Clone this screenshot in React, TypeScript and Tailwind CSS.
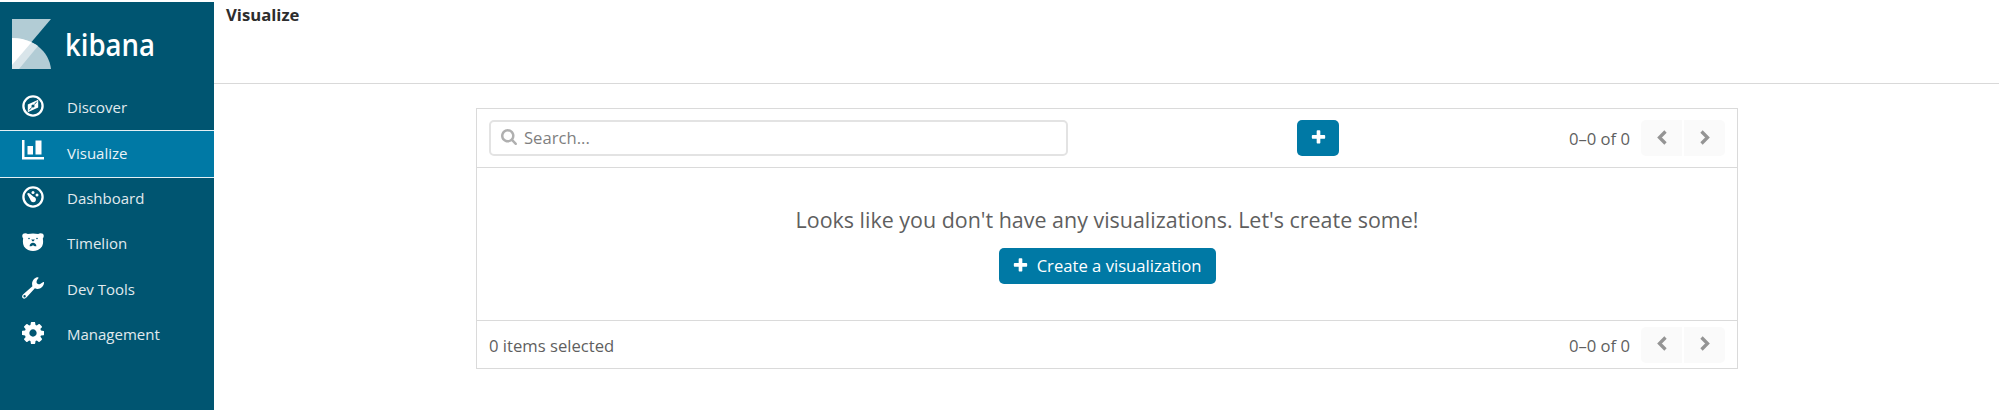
import type { ReactNode } from "react";

function KibanaMark() {
  return (
    <svg width="39" height="50" viewBox="0 0 39 50" className="shrink-0">
      <path d="M0 0H39L0 46Z" fill="#b2ccd5" />
      <path d="M0 19C21 19 37 32 39 50H0Z" fill="#b2ccd5" />
      <path d="M0 19C10 19 19 22 26 27L7 50H0Z" fill="#d9e5ea" />
      <path d="M0 19C7 19 14 20.500 19.500 23.200L0 46Z" fill="#fff" />
    </svg>
  );
}

function CompassIcon() {
  return (
    <svg width="22" height="22" viewBox="0 0 22 22">
      <circle cx="11" cy="11" r="9.600" fill="none" stroke="#fff" strokeWidth="2.300" />
      <path fill="#fff" fillRule="evenodd" d="M16.200 4.800V12.400L5.800 17.200V9.600ZM11 9.400A1.600 1.600 0 1 0 11 12.600A1.600 1.600 0 1 0 11 9.400Z" />
      <path d="M14.800 6.700 12.300 9.600M7.200 15.300 9.700 12.400" stroke="#005571" strokeWidth="0.900" />
    </svg>
  );
}

function BarsIcon() {
  return (
    <svg width="22" height="20" viewBox="0 0 22 20">
      <path fill="#fff" d="M0 0H2.500V17H22V19.500H0ZM5.500 6H11V14.500H5.500ZM13.500 0.500H19.500V14.500H13.500Z" />
    </svg>
  );
}

function GaugeIcon() {
  return (
    <svg width="22" height="22" viewBox="0 0 22 22">
      <circle cx="11" cy="11" r="9.600" fill="none" stroke="#fff" strokeWidth="2.300" />
      <g fill="#fff">
        <circle cx="11" cy="6.400" r="1.500" />
        <circle cx="15" cy="9" r="1.500" />
        <circle cx="11.300" cy="13.600" r="2.600" />
        <path d="M5.300 8.200C5.300 6.800 6.700 6.600 7.700 7.600L13.400 12.200 9.300 15.300Z" />
      </g>
    </svg>
  );
}

function BearIcon() {
  return (
    <svg width="22" height="18" viewBox="0 0 22 18">
      <path
        fill="#fff"
        d="M1.200 0.800C2.500 -0.200 4.800 0.100 5.800 1C9 0.200 13 0.200 16.200 1C17.200 0.100 19.500 -0.200 20.800 0.800C22.200 2 22 4.200 20.800 5.500C21.300 8 21.300 11 20 13.500C18 16.500 14 18 11 18C8 18 4 16.500 2 13.500C0.700 11 0.700 8 1.200 5.500C0 4.200 -0.200 2 1.200 0.800Z"
      />
      <g fill="#005571">
        <circle cx="7" cy="5.500" r="0.800" />
        <circle cx="15" cy="5.500" r="0.800" />
        <path d="M9.200 6.600H12.800L11.600 8.200H10.400Z" />
        <path d="M11 9.800C12.800 9.800 14.400 11.400 14.400 13.200C13 13.800 12 12.600 11 12.600C10 12.600 9 13.800 7.600 13.200C7.600 11.400 9.200 9.800 11 9.800Z" />
      </g>
    </svg>
  );
}

function WrenchIcon() {
  return (
    <svg width="22" height="22" viewBox="0 0 22 22">
      <path
        fill="#fff"
        fillRule="evenodd"
        d="M20.900 5.200C21.800 4.800 22.200 5.400 22 6.300C21.400 9.500 18.800 11.900 15.600 11.900C14.700 11.900 13.700 11.700 12.900 11.300L4.400 20.600C3.200 21.900 1.700 22 0.800 21.100C-0.200 20.100 -0.200 18.600 1 17.500L10.400 9.200C9.200 5.100 11.400 1.100 15.300 0.200C16.300 0 17 0.600 16.400 1.300C14.200 3.500 14.200 5.600 15.200 6.600C16.600 8 18.400 6.900 20.900 5.200ZM2.600 18.100A1.200 1.200 0 1 0 2.600 20.500A1.200 1.200 0 1 0 2.600 18.100Z"
      />
    </svg>
  );
}

function GearIcon() {
  return (
    <svg width="22" height="22" viewBox="128 128 1536 1536">
      <path
        fill="#fff"
        d="M1152 896q0-106-75-181t-181-75-181 75-75 181 75 181 181 75 181-75 75-181zm512-109v222q0 12-8 23t-20 13l-185 28q-19 54-39 91 35 50 107 138 10 12 10 25t-9 23q-27 37-99 108t-94 71q-12 0-26-9l-138-108q-44 23-91 38-16 136-29 186-7 28-36 28h-222q-14 0-24.500-8.500t-11.500-21.500l-28-184q-49-16-90-37l-141 107q-10 9-25 9-14 0-25-11-126-114-165-168-7-10-7-23 0-12 8-23 15-21 51-66.500t54-70.500q-27-50-41-99l-183-27q-13-2-21-12.500t-8-23.500v-222q0-12 8-23t19-13l186-28q14-46 39-92-40-57-107-138-10-12-10-24 0-10 9-23 26-36 98.500-107.500t94.500-71.500q13 0 26 10l138 107q44-23 91-38 16-136 29-186 7-28 36-28h222q14 0 24.500 8.500t11.500 21.500l28 184q49 16 90 37l142-107q9-9 24-9 13 0 25 10 129 119 165 170 7 8 7 22 0 12-8 23-15 21-51 66.500t-54 70.500q26 50 41 98l183 28q13 2 21 12.500t8 23.500z"
      />
    </svg>
  );
}

function PlusIcon() {
  return (
    <svg width="17" height="17" viewBox="0 0 1792 1792" fill="currentColor" className="mb-0.5 shrink-0">
      <path d="M1600 736v192q0 40-28 68t-68 28h-416v416q0 40-28 68t-68 28h-192q-40 0-68-28t-28-68v-416h-416q-40 0-68-28t-28-68v-192q0-40 28-68t68-28h416v-416q0-40 28-68t68-28h192q40 0 68 28t28 68v416h416q40 0 68 28t28 68z" />
    </svg>
  );
}

function SearchIcon() {
  return (
    <svg width="16" height="16" viewBox="64 128 1664 1664" fill="#b0b0b0" className="mb-0.5 shrink-0">
      <path d="M1216 832q0-185-131.500-316.500t-316.500-131.500-316.500 131.500-131.500 316.500 131.500 316.500 316.500 131.500 316.500-131.500 131.500-316.500zm512 832q0 52-38 90t-90 38q-54 0-90-38l-343-342q-179 124-399 124-143 0-273.500-55.500t-225-150-150-225-55.500-273.500 55.500-273.500 150-225 225-150 273.500-55.500 273.500 55.500 225 150 150 225 55.500 273.500q0 220-124 399l343 343q37 37 37 90z" />
    </svg>
  );
}

function Chevron({ flip = false }: { flip?: boolean }) {
  return (
    <svg width="10" height="15" viewBox="0 0 10 15" className={flip ? "mb-0.5 -scale-x-100" : "mb-0.5"}>
      <path d="M8.500 1.500 2.500 7.500 8.500 13.500" fill="none" stroke="#949494" strokeWidth="3.300" />
    </svg>
  );
}

function Pager() {
  return (
    <div className="flex items-center">
      <span className="mr-[11px] pt-[3px]">0–0 of 0</span>
      <button className="mr-0.5 flex h-9 w-[41px] items-center justify-center rounded-l-[5px] bg-[#fafafa]">
        <Chevron />
      </button>
      <button className="flex h-9 w-[41px] items-center justify-center rounded-r-[5px] bg-[#fafafa]">
        <Chevron flip />
      </button>
    </div>
  );
}

function NavItem({ icon, label, active = false }: { icon: ReactNode; label: string; active?: boolean }) {
  return (
    <a
      className={
        active
          ? "-mb-0.5 flex h-[47.500px] items-center border-y border-[#e4f0f5] bg-[#0079a5] pl-[21.500px] text-[#eaf3f7]"
          : "flex h-[45.300px] items-center pl-[21.500px] text-[#e0eaee]"
      }
    >
      <span className={active ? "mb-2 flex w-[45.500px]" : "mb-[3px] flex w-[45.500px]"}>{icon}</span>
      <span className={active ? "pb-0.5 text-[15px]" : "text-[15px]"}>{label}</span>
    </a>
  );
}

export default function App() {
  return (
    <div className="flex h-[410px] bg-white pt-0.5 font-['Open_Sans',sans-serif] text-[#5f5f5f]">
      <nav className="flex w-[214px] shrink-0 flex-col bg-[#005571]">
        <div className="flex h-[83px] items-start pl-3 pt-[17px]">
          <KibanaMark />
          <svg width="120" height="60" viewBox="0 0 120 60" className="ml-1 overflow-visible">
            <text x="10" y="37" textLength="90" lengthAdjust="spacingAndGlyphs" fill="#fff" className="text-[30px] font-semibold">
              kibana
            </text>
          </svg>
        </div>
        <NavItem icon={<CompassIcon />} label="Discover" />
        <NavItem icon={<BarsIcon />} label="Visualize" active />
        <NavItem icon={<GaugeIcon />} label="Dashboard" />
        <NavItem icon={<BearIcon />} label="Timelion" />
        <NavItem icon={<WrenchIcon />} label="Dev Tools" />
        <NavItem icon={<GearIcon />} label="Management" />
      </nav>
      <main className="flex grow flex-col">
        <header className="h-[82px] border-b border-[#d9d9d9] pl-3 pt-0.5">
          <h1 className="text-[16.700px] font-bold leading-[22px] text-[#2d2d2d]">Visualize</h1>
        </header>
        <section className="ml-[262px] mt-6 w-[1262px] border border-[#dadada] text-[16.650px]">
          <div className="flex h-[59px] items-center border-b border-[#dadada] pl-3 pr-3">
            <div className="flex h-9 w-[579px] items-center gap-[7px] rounded-[5px] border-2 border-[#e3e3e3] pl-2.5 text-[#7f7f7f]">
              <SearchIcon />
              <span>Search...</span>
            </div>
            <button className="ml-[229px] flex h-9 w-[42px] items-center justify-center rounded-[5px] bg-[#0079a5] text-white">
              <PlusIcon />
            </button>
            <div className="ml-auto">
              <Pager />
            </div>
          </div>
          <div className="flex h-[152px] flex-col items-center pt-9">
            <p className="text-[21.450px] leading-8">Looks like you don't have any visualizations. Let's create some!</p>
            <button className="mt-3 flex h-9 w-[217px] items-center justify-center gap-2 rounded-[5px] bg-[#0079a5] pr-px text-white">
              <PlusIcon />
              <span>Create a visualization</span>
            </button>
          </div>
          <div className="flex h-[48px] items-center justify-between border-t border-[#dadada] px-3">
            <span className="pt-[3px]">0 items selected</span>
            <Pager />
          </div>
        </section>
      </main>
    </div>
  );
}
